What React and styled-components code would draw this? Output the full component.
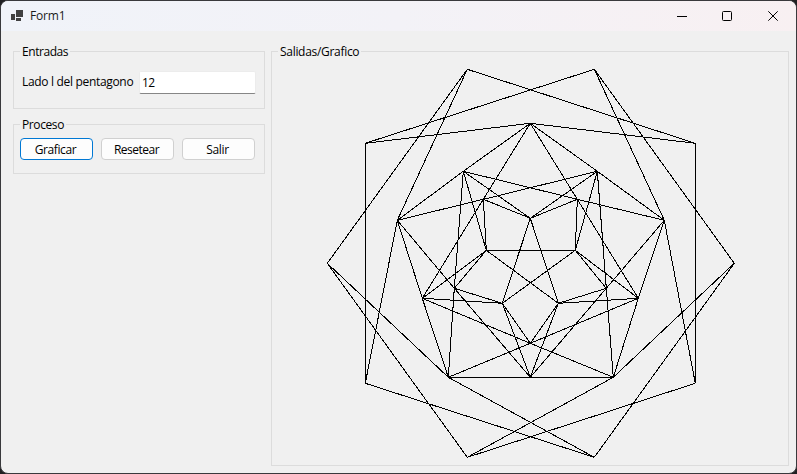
import React from "react";
import styled, { createGlobalStyle } from "styled-components";

const GlobalStyle = createGlobalStyle`
  * { box-sizing: border-box; }
  body { margin: 0; background: #202022; overflow: hidden; }
`;

const Window = styled.div`
  width: 797px;
  height: 474px;
  border: 1px solid #39393c;
  border-radius: 8px;
  background: #f0f0f0;
  overflow: hidden;
  font: 12px/16px "Open Sans", "Noto Sans", sans-serif;
  color: #000;
`;

const TitleBar = styled.header`
  display: flex;
  align-items: center;
  height: 30px;
  padding-left: 10px;
  background: linear-gradient(90deg, #f0f3f9 0%, #f3f2f7 50%, #f8f0f2 100%);
`;

const Title = styled.span`
  flex: 1;
  margin-left: 7px;
  color: #1b1b1b;
  letter-spacing: -0.2px;
`;

const Controls = styled.div`
  display: flex;
  height: 30px;
`;

const ControlButton = styled.button`
  display: grid;
  place-items: center;
  width: ${(p) => p.$width || 45}px;
  padding: 0;
  border: 0;
  background: none;
`;

const Body = styled.main`
  display: flex;
  gap: 6px;
  padding: 12px 7px 0 12px;
`;

const Column = styled.div`
  display: flex;
  flex-direction: column;
  gap: 7px;
  width: 252px;
`;

const Group = styled.fieldset`
  min-width: 0;
  width: ${(p) => p.$width}px;
  height: ${(p) => p.$height}px;
  margin: 0;
  padding: 0;
  border: 1px solid #dcdcdc;
`;

const Legend = styled.legend`
  height: 16px;
  margin-left: 6px;
  padding: 1px 2px 0;
  letter-spacing: ${(p) => p.$spacing || "-0.3px"};
  white-space: nowrap;
`;

const Field = styled.label`
  display: flex;
  align-items: center;
  padding: 12px 0 0 8px;
`;

const FieldLabel = styled.span`
  width: 117px;
  padding-bottom: 1px;
  letter-spacing: -0.32px;
  white-space: nowrap;
`;

const TextBox = styled.input`
  width: 117px;
  height: 23px;
  padding: 0 2px 1px;
  border: 1px solid #ececec;
  border-bottom-color: #868686;
  border-radius: 2px;
  outline: 0;
  background: #fff;
  font: inherit;
  letter-spacing: -0.6px;
  color: #000;
`;

const Actions = styled.div`
  display: flex;
  gap: 8px;
  padding: 6px 0 0 6px;
`;

const PushButton = styled.button`
  display: flex;
  align-items: center;
  justify-content: center;
  width: 73px;
  height: 22px;
  padding: 2px 2px 0 0;
  border: 1px solid ${(p) => (p.$primary ? "#0078d4" : "#d0d0d0")};
  border-radius: 4px;
  background: #fdfdfd;
  color: #000;
  font: inherit;
  letter-spacing: ${(p) => p.$spacing || "-0.3px"};
`;

const Drawing = styled.svg`
  display: block;
  width: 516px;
  height: 406px;
  shape-rendering: crispEdges;
`;

const outer = [[467,69],[594,69],[695,143],[734,263],[695,383],[594,457],[467,457],[365,383],[327,263],[365,143]];
const large = [[530,123],[664,220],[613,377],[448,377],[397,220]];
const middle = [[597,171],[638,298],[530,377],[422,298],[463,171]];
const crossing = [[577,199],[606,288],[530,343],[454,288],[483,199]];
const inner = [[530,218],[575,250],[558,303],[502,303],[486,250]];

const segments = [];
for (let i = 0; i < 10; i++) segments.push([outer[i], outer[(i + 2) % 10]]);
for (let i = 0; i < 5; i++) {
  const next = (i + 1) % 5;
  segments.push(
    [large[i], outer[(2 * i + 9) % 10]],
    [large[i], outer[(2 * i + 2) % 10]],
    [large[i], middle[i]],
    [middle[i], large[next]],
    [large[i], crossing[i]],
    [crossing[i], middle[next]],
    [large[i], crossing[(i + 4) % 5]],
    [crossing[(i + 4) % 5], middle[(i + 3) % 5]],
    [middle[i], inner[i]],
    [middle[i], inner[next]],
    [crossing[i], inner[i]],
    [crossing[i], inner[next]],
    [inner[i], inner[(i + 2) % 5]]
  );
}

const path = segments
  .map(([a, b]) => `M${a[0] + 0.3} ${a[1] + 0.3}L${b[0] + 0.3} ${b[1] + 0.3}`)
  .join("");

export default function App() {
  return (
    <>
      <GlobalStyle />
      <Window>
        <TitleBar>
          <svg width="12" height="12" fill="#404040" shapeRendering="crispEdges">
            <path d="M5 0h7v7H5zM0 4h4v6H0zM5 8h5v3H5z" />
          </svg>
          <Title>Form1</Title>
          <Controls>
            <ControlButton aria-label="Minimize">
              <svg width="10" height="10"><path d="M0 5.5h10" stroke="#000" /></svg>
            </ControlButton>
            <ControlButton aria-label="Maximize">
              <svg width="10" height="10"><rect x=".5" y=".5" width="9" height="9" rx="1" fill="none" stroke="#000" /></svg>
            </ControlButton>
            <ControlButton $width={47} aria-label="Close">
              <svg width="10" height="10"><path d="M.3.3l9.4 9.4M9.7.3L.3 9.7" stroke="#000" /></svg>
            </ControlButton>
          </Controls>
        </TitleBar>
        <Body>
          <Column>
            <Group $width={252} $height={66}>
              <Legend $spacing="-0.45px">Entradas</Legend>
              <Field>
                <FieldLabel>Lado l del pentagono</FieldLabel>
                <TextBox defaultValue="12" />
              </Field>
            </Group>
            <Group $width={252} $height={58}>
              <Legend $spacing="-0.4px">Proceso</Legend>
              <Actions>
                <PushButton $primary $spacing="-0.4px">Graficar</PushButton>
                <PushButton $spacing="-0.5px">Resetear</PushButton>
                <PushButton>Salir</PushButton>
              </Actions>
            </Group>
          </Column>
          <Group $width={518} $height={423}>
            <Legend>Salidas/Grafico</Legend>
            <Drawing viewBox="272 59 516 406">
              <path d={path} fill="none" stroke="#000" />
            </Drawing>
          </Group>
        </Body>
      </Window>
    </>
  );
}
